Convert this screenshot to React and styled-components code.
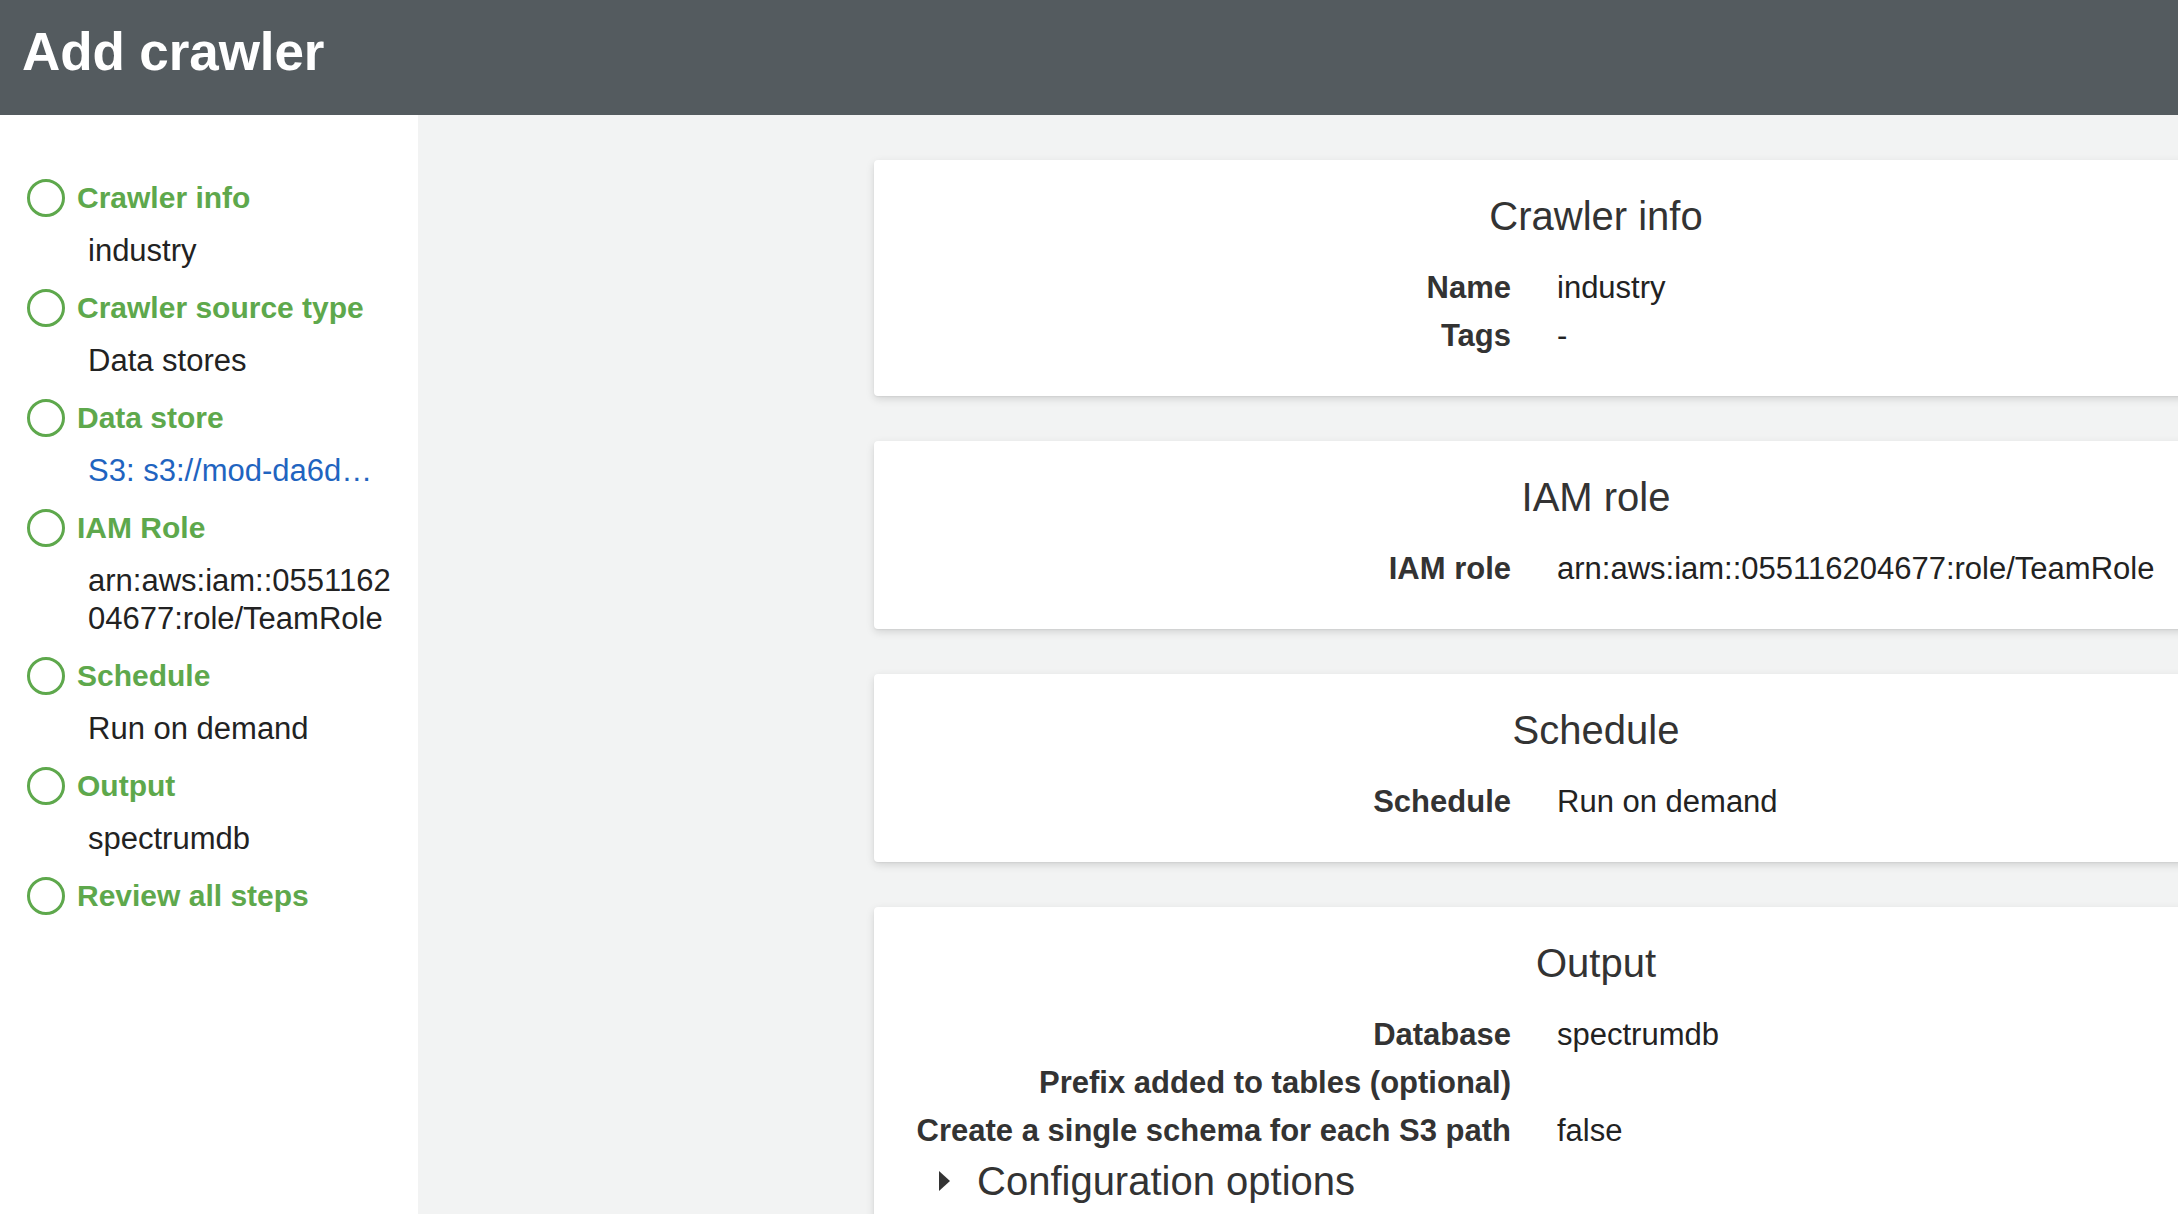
import styled, { createGlobalStyle } from "styled-components";

const GlobalStyle = createGlobalStyle`
  html, body {
    margin: 0;
    padding: 0;
    overflow: hidden;
  }
  body {
    font-family: "Liberation Sans", Arial, sans-serif;
    color: #222;
    background: #f2f3f3;
  }
`;

const steps = [
  { title: "Crawler info", value: "industry" },
  { title: "Crawler source type", value: "Data stores" },
  { title: "Data store", value: "S3: s3://mod-da6d…", link: true },
  { title: "IAM Role", value: "arn:aws:iam::055116204677:role/TeamRole" },
  { title: "Schedule", value: "Run on demand" },
  { title: "Output", value: "spectrumdb" },
  { title: "Review all steps" },
];

const cards = [
  {
    title: "Crawler info",
    rows: [
      ["Name", "industry"],
      ["Tags", "-"],
    ],
  },
  {
    title: "IAM role",
    rows: [["IAM role", "arn:aws:iam::055116204677:role/TeamRole"]],
  },
  {
    title: "Schedule",
    rows: [["Schedule", "Run on demand"]],
  },
  {
    title: "Output",
    rows: [
      ["Database", "spectrumdb"],
      ["Prefix added to tables (optional)", ""],
      ["Create a single schema for each S3 path", "false"],
    ],
    options: true,
  },
];

export default function App() {
  return (
    <Page>
      <GlobalStyle />
      <Header>
        <h1>Add crawler</h1>
      </Header>
      <Body>
        <Sidebar>
          {steps.map((step) => (
            <Step key={step.title}>
              <StepTitle>
                <Circle />
                {step.title}
              </StepTitle>
              {step.value && <StepValue $link={step.link}>{step.value}</StepValue>}
            </Step>
          ))}
        </Sidebar>
        <Main>
          {cards.map((card) => (
            <Card key={card.title}>
              <CardTitle>{card.title}</CardTitle>
              <Rows>
                {card.rows.map(([label, value]) => (
                  <Row key={label}>
                    <Label>{label}</Label>
                    <Value>{value}</Value>
                  </Row>
                ))}
              </Rows>
              {card.options && (
                <Options>
                  <Caret />
                  Configuration options
                </Options>
              )}
            </Card>
          ))}
        </Main>
      </Body>
    </Page>
  );
}

const Page = styled.div`
  width: 2178px;
  height: 1214px;
  display: flex;
  flex-direction: column;
  overflow: hidden;
`;

const Header = styled.header`
  height: 115px;
  flex-shrink: 0;
  background: #545b5f;
  display: flex;
  align-items: center;
  padding: 0 22px;
  h1 {
    margin: 0 0 12px;
    color: #fff;
    font-size: 53px;
    font-weight: 700;
    letter-spacing: -0.1px;
  }
`;

const Body = styled.div`
  flex: 1;
  display: flex;
  min-height: 0;
`;

const Sidebar = styled.nav`
  width: 418px;
  flex-shrink: 0;
  background: #fff;
  padding: 63px 0 0 27px;
  box-sizing: border-box;
  display: flex;
  flex-direction: column;
  gap: 18px;
`;

const Step = styled.div`
  display: flex;
  flex-direction: column;
  gap: 14px;
`;

const StepTitle = styled.div`
  display: flex;
  align-items: center;
  gap: 12px;
  height: 40px;
  color: #5ea84c;
  font-size: 30px;
  font-weight: 700;
`;

const Circle = styled.span`
  width: 38px;
  height: 38px;
  box-sizing: border-box;
  border: 3px solid #5ea84c;
  border-radius: 50%;
  flex-shrink: 0;
`;

const StepValue = styled.div`
  margin-left: 61px;
  width: 310px;
  font-size: 31px;
  line-height: 38px;
  word-break: break-all;
  color: ${(p) => (p.$link ? "#1f64c0" : "#222")};
`;

const Main = styled.main`
  flex: 1;
  padding: 45px 0 0 456px;
  display: flex;
  flex-direction: column;
  gap: 45px;
  overflow: hidden;
`;

const Card = styled.section`
  width: 1444px;
  flex-shrink: 0;
  background: #fff;
  border-radius: 4px;
  box-shadow: 0 3px 8px rgba(0, 0, 0, 0.13), 0 1px 2px rgba(0, 0, 0, 0.06);
  padding: 32px 0 36px;
  box-sizing: border-box;
`;

const CardTitle = styled.h2`
  margin: 0 0 24px;
  text-align: center;
  font-size: 40px;
  line-height: 48px;
  font-weight: 400;
  color: #333;
`;

const Rows = styled.div`
  display: flex;
  flex-direction: column;
`;

const Row = styled.div`
  display: grid;
  grid-template-columns: 637px 1fr;
  column-gap: 46px;
  line-height: 48px;
  font-size: 31px;
`;

const Label = styled.div`
  text-align: right;
  font-weight: 700;
  color: #333;
`;

const Value = styled.div`
  color: #222;
`;

const Options = styled.div`
  display: flex;
  align-items: center;
  gap: 27px;
  margin: 2px 0 0 65px;
  font-size: 40px;
  line-height: 48px;
  color: #333;
`;

const Caret = styled.span`
  width: 0;
  height: 0;
  border-top: 10px solid transparent;
  border-bottom: 10px solid transparent;
  border-left: 11px solid #333;
`;
